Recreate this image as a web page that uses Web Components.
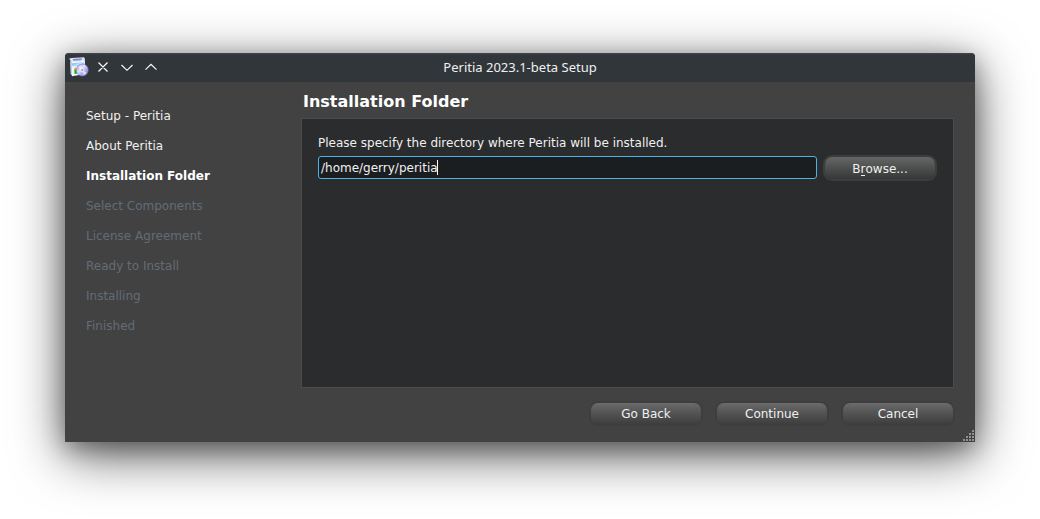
<!DOCTYPE html>
<html lang="en">
<head>
<meta charset="utf-8">
<title>Peritia 2023.1-beta Setup</title>
<style>
html,body{margin:0;background:#fff;height:519px;overflow:hidden}
body{box-sizing:border-box;padding:53px 65px 77px;font:12px/16px "DejaVu Sans",sans-serif;color:#f0f0f0}
</style>
</head>
<body>
<setup-window></setup-window>
<script>
const define = (name, html) => customElements.define(name, class extends HTMLElement {
  constructor(){ super(); this.attachShadow({mode:'open'}).innerHTML = html; }
});

define('app-icon', `<style>:host{display:block;width:20px;height:20px}svg{display:block}</style>
<svg width="20" height="20" viewBox="0 0 20 20">
<defs><linearGradient id="b" x2="1" y2="1"><stop stop-color="#2f92e6"/><stop offset=".5" stop-color="#bfe0fc"/><stop offset="1" stop-color="#4f91d9"/></linearGradient>
<linearGradient id="d" x2="1" y2="1"><stop stop-color="#8287da"/><stop offset=".4" stop-color="#e4e0ff"/><stop offset=".65" stop-color="#a8a8f0"/><stop offset="1" stop-color="#777fd2"/></linearGradient></defs>
<path d="M.2 1.5L3 1L15 .2L16 2L15.5 4.5L2.5 5.5Z" fill="#dce6fa"/>
<path d="M3.5 2L13.5 1.3L12 3.2L4.5 3.8Z" fill="#8487c4"/>
<path d="M1 4L2.8 5L3.6 19L1.6 17.3Z" fill="#b9cade"/>
<path d="M2.6 5L16 3.7V17L3 19.2Z" fill="#eef7ff"/>
<path d="M2.9 6.6L15.5 4.9V8.5L3.2 9.5Z" fill="url(#b)"/>
<path d="M5.3 12H9V16.5L5.5 17Z" fill="#22a82b"/><path d="M5.5 10.8L8.5 10.4V12.6L5.5 13Z" fill="#f3a02b"/>
<circle cx="13.3" cy="13" r="5.9" fill="url(#d)" stroke="#8b90cf" stroke-width=".6"/>
<path d="M13.3 13L9 10.5A5 5 0 0 1 12 8ZM13.3 13L17.6 15.5A5 5 0 0 1 14.3 18Z" fill="#fff" opacity=".6"/>
<circle cx="13.3" cy="13" r="1.6" fill="#9a99c8" stroke="#fff" stroke-width=".8"/>
</svg>`);

define('title-bar', `<style>
:host{display:grid;grid-template-columns:120px 1fr 120px;align-items:center;height:29px;background:linear-gradient(#40484e 0,#31363b 2px);border-radius:4px 4px 0 0;font:13px/20px "Noto Sans",sans-serif}
.l{display:flex;align-items:center;height:20px;padding-left:4px;margin-top:-2px}
svg{display:block;fill:none;stroke:#fcfcfc;stroke-width:1.15}
.c{margin-left:5px}.t{text-align:center;white-space:nowrap;margin-top:-2px}
</style><div class="l"><app-icon></app-icon><svg class="c" width="72" height="20" viewBox="0 0 72 20"><path d="M4.5 5.5L13.5 14.5M13.5 5.5L4.5 14.5M27.5 8L33 13.3L38.5 8M51.5 12.7L57 7.3L62.5 12.7"/></svg></div><div class="t"><slot></slot></div>`);

define('step-item', `<style>:host{display:block;height:30px;line-height:30px;white-space:nowrap}:host([current]){font-weight:bold;color:#fff}:host([pending]){color:#626c76}</style><slot></slot>`);

define('step-list', `<style>:host{display:flex;flex-direction:column;width:215px;padding:19px 0 0 21px}</style><slot></slot>`);

define('push-button', `<style>
:host{display:block;box-sizing:border-box;width:110px;height:21px;border-radius:7px;background:linear-gradient(#6b6b6b,#575757 40%,#3e3e3e);box-shadow:0 0 0 2px #3e3e3e;text-align:center;line-height:22px}
:host([focus]){height:22px;margin-top:1px;line-height:24px;background:linear-gradient(#656666,#4d4e4e 50%,#363838);box-shadow:0 0 0 2px #3c3d3d}
</style><slot></slot>`);

define('path-field', `<style>
:host{display:flex;box-sizing:border-box;width:499px;height:23px;border:1px solid #4db2e6;border-radius:3px;background:#1b1e20;padding:3px 2px;line-height:16px}
i{display:block;width:1px;height:15px;background:#fcfcfc;margin-left:-1px}
</style><slot></slot><i></i>`);

define('folder-page', `<style>
:host{display:block;width:653px}
h1{font:bold 16px/20px "DejaVu Sans",sans-serif;color:#fff;margin:10px 0 6px 2px;white-space:nowrap}
.p{box-sizing:border-box;height:270px;border:1px solid #484d50;background:#2a2c2d;padding:15px 16px}
.m{height:18px;line-height:18px;margin-bottom:4px;white-space:nowrap}
.r{display:flex;gap:8px;align-items:flex-start}
u{text-decoration:none;border-bottom:1px solid;display:inline-block;line-height:12px}
</style><h1>Installation Folder</h1><div class="p"><div class="m"><span>Please specify the directory where Peritia will be installed.</span></div><div class="r"><path-field><span>/home/gerry/peritia</span></path-field><push-button focus><span>B<u>r</u>owse...</span></push-button></div></div>`);

define('size-grip', `<style>:host{display:block;position:absolute;right:0;bottom:0}svg{display:block}</style>
<svg width="13" height="13" viewBox="0 0 13 13" fill="#919191"><path d="M10 1h2v2h-2ZM7 4h2v2h-2ZM10 4h2v2h-2ZM4 7h2v2h-2ZM7 7h2v2h-2ZM10 7h2v2h-2ZM1 10h2v2h-2ZM4 10h2v2h-2ZM7 10h2v2h-2ZM10 10h2v2h-2Z"/></svg>`);

define('setup-window', `<style>
:host{display:block;position:relative;width:910px;height:389px;background:#424242;border-radius:4px 4px 0 0;box-shadow:0 13px 52px rgba(0,0,0,.65),0 6px 22px rgba(0,0,0,.3)}
.main{display:flex}
.f{display:flex;justify-content:flex-end;gap:16px;padding:15px 22px 0 0}
</style>
<title-bar><span>Peritia 2023.1-beta Setup</span></title-bar>
<div class="main"><step-list>
<step-item>Setup - Peritia</step-item><step-item>About Peritia</step-item><step-item current>Installation Folder</step-item><step-item pending>Select Components</step-item><step-item pending>License Agreement</step-item><step-item pending>Ready to Install</step-item><step-item pending>Installing</step-item><step-item pending>Finished</step-item>
</step-list><folder-page></folder-page></div>
<div class="f"><push-button>Go Back</push-button><push-button>Continue</push-button><push-button>Cancel</push-button></div>
<size-grip></size-grip>`);
</script>
</body>
</html>
